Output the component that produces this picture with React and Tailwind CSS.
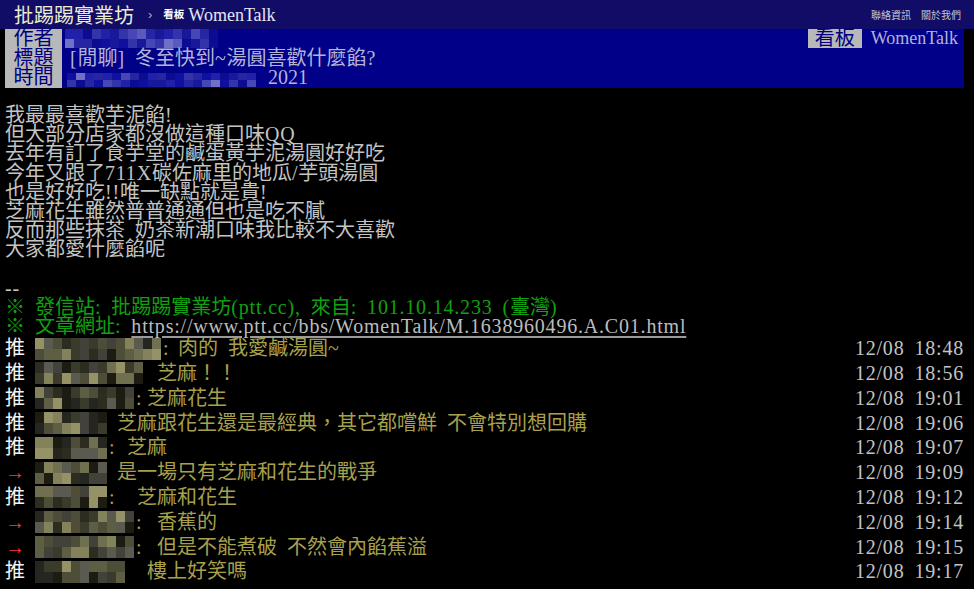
import React from 'react';

const ASCII = /^[\x20-\x7e]+$/;

// half-width runs get stretched a bit so they sit on the 10px grid of the original
function Txt({ s }) {
  return s
    .split(/([\x20-\x7e]+)/)
    .filter(Boolean)
    .map((p, i) =>
      ASCII.test(p) ? (
        <span key={i} className="inline-block align-top tracking-[0.8px] [word-spacing:4.2px]">{p}</span>
      ) : (
        <span key={i} className="inline-block align-top">{p}</span>
      )
    );
}

function Mosaic({ cols, rows, cw, ch, palette, seed }) {
  let s = seed;
  const rnd = () => {
    s = (s * 9301 + 49297) % 233280;
    return s / 233280;
  };
  const cells = [];
  for (let i = 0; i < cols * rows; i++) cells.push(palette[Math.floor(rnd() * palette.length)]);
  return (
    <span className="flex flex-wrap shrink-0" style={{ width: cols * cw }}>
      {cells.map((c, i) => (
        <span key={i} className="block" style={{ width: cw, height: ch, background: c }} />
      ))}
    </span>
  );
}

const olive = ['#1c1c12', '#2c2c20', '#3b3b2b', '#4d4d38', '#5e5e45', '#707050', '#83825a', '#949266', '#42423a', '#5a5a50', '#262620'];
const blues = ['#0c0c92', '#18189a', '#2626a2', '#3434aa', '#4646b4', '#5a5abc', '#7070c6', '#1010a0', '#2020a8'];

const body = [
  '我最最喜歡芋泥餡!',
  '但大部分店家都沒做這種口味QQ',
  '去年有訂了食芋堂的鹹蛋黃芋泥湯圓好好吃',
  '今年又跟了711X碳佐麻里的地瓜/芋頭湯圓',
  '也是好好吃!!唯一缺點就是貴!',
  '芝麻花生雖然普普通通但也是吃不膩',
  '反而那些抹茶 奶茶新潮口味我比較不大喜歡',
  '大家都愛什麼餡呢',
  '',
  '--',
];

const pushes = [
  { tag: '推', cols: 14, colon: true, cx: 178, text: '肉的 我愛鹹湯圓~', time: '12/08 18:48' },
  { tag: '推', cols: 12, colon: false, cx: 157, text: '芝麻！！', time: '12/08 18:56' },
  { tag: '推', cols: 11, colon: true, cx: 147, text: '芝麻花生', time: '12/08 19:01' },
  { tag: '推', cols: 8, colon: false, cx: 117, text: '芝麻跟花生還是最經典，其它都嚐鮮 不會特別想回購', time: '12/08 19:06' },
  { tag: '推', cols: 8, colon: true, cx: 127, text: '芝麻', time: '12/08 19:07' },
  { tag: '→', cols: 8, colon: false, cx: 117, text: '是一場只有芝麻和花生的戰爭', time: '12/08 19:09' },
  { tag: '推', cols: 8, colon: true, cx: 137, text: '芝麻和花生', time: '12/08 19:12' },
  { tag: '→', cols: 11, colon: true, cx: 157, text: '香蕉的', time: '12/08 19:14' },
  { tag: '→', cols: 11, colon: true, cx: 157, text: '但是不能煮破 不然會內餡蕉溢', time: '12/08 19:15' },
  { tag: '推', cols: 10, colon: false, cx: 147, text: '樓上好笑嗎', time: '12/08 19:17' },
];

export default function App() {
  return (
    <div className="w-full h-[589px] overflow-hidden bg-black font-['Liberation_Serif','Noto_Sans_CJK_TC',serif] text-[20px] leading-[19.2px] text-[#c4c4c4]">
      {/* top bar */}
      <div className="h-[29px] bg-[#110d66] flex items-center pl-[14px] pr-[13px]">
        <span className="font-['Noto_Sans_CJK_TC',sans-serif] text-[20px] leading-none text-[#ececd0]">批踢踢實業坊</span>
        <span className="ml-[14px] text-[13px] leading-none text-[#b0b0c0] font-['Liberation_Sans',sans-serif]">›</span>
        <span className="ml-[11px] text-[10.5px] leading-none font-bold text-white font-['Noto_Sans_CJK_TC',sans-serif]">看板</span>
        <span className="ml-[4px] text-[18px] leading-none text-[#e6e6f2] font-['Liberation_Serif',serif]">WomenTalk</span>
        <span className="ml-auto flex gap-[10px] text-[10px] leading-none text-[#c4c4cc] font-['Noto_Sans_CJK_TC',sans-serif]">
          <span>聯絡資訊</span>
          <span>關於我們</span>
        </span>
      </div>

      <div className="pl-[5px] pr-[10px]">
        {/* meta */}
        <div className="bg-[#000088] text-[#b4b4d6] leading-[19.67px]">
          <div className="flex items-center h-[19.67px]">
            <span className="w-[57px] h-full bg-[#b8b8b8] text-[#000080] text-center">作者</span>
            <span className="pl-[3px]">
              <Mosaic cols={17} rows={2} cw={9} ch={9.5} palette={blues} seed={17} />
            </span>
            <span className="ml-auto flex items-center h-full pr-[6px]">
              <span className="h-[19px] px-[7px] bg-[#b8b8b8] text-[#000080] leading-[19px]">看板</span>
              <span className="ml-[9px] text-[18px] leading-[19px]">WomenTalk</span>
            </span>
          </div>
          <div className="flex items-center h-[19.67px]">
            <span className="w-[57px] h-full bg-[#b8b8b8] text-[#000080] text-center">標題</span>
            <span className="pl-[8px] whitespace-pre">
              <Txt s="[閒聊] 冬至快到~湯圓喜歡什麼餡?" />
            </span>
          </div>
          <div className="flex items-center h-[19.67px]">
            <span className="w-[57px] h-full bg-[#b8b8b8] text-[#000080] text-center">時間</span>
            <span className="pl-[5px] pt-[4px]">
              <Mosaic cols={21} rows={2} cw={9} ch={7} palette={blues} seed={91} />
            </span>
            <span className="pl-[12px]">2021</span>
          </div>
        </div>

        {/* article */}
        <div className="pt-[18px] whitespace-pre">
          {body.map((l, i) => (
            <div key={i} className="h-[19.2px]">
              <Txt s={l} />
            </div>
          ))}
          <div className="h-[19.2px] text-[#10a010]">
            <Txt s="※ 發信站: 批踢踢實業坊(ptt.cc), 來自: 101.10.14.233 (臺灣)" />
          </div>
          <div className="h-[19.2px] text-[#10a010]">
            <Txt s="※ 文章網址: " />
            <span className="inline-block align-top text-[#bcbcbc] underline underline-offset-[3px] decoration-[#9a9a9a] tracking-[0.8px]">
              https://www.ptt.cc/bbs/WomenTalk/M.1638960496.A.C01.html
            </span>
          </div>
        </div>

        {/* pushes */}
        <div className="leading-[24.8px]">
          {pushes.map((p, i) => (
            <div key={i} className="flex items-center h-[24.8px] whitespace-pre">
              <span className={p.tag === '推' ? 'w-[30px] shrink-0 text-[#f4f4f4]' : 'w-[30px] shrink-0 text-[#ee3a3a]'}>
                {p.tag}
              </span>
              <Mosaic cols={p.cols} rows={2} cw={9} ch={11} palette={olive} seed={i * 37 + 11} />
              <span className="shrink-0 pl-[2px] text-[#a8a04c]" style={{ width: p.cx - 35 - p.cols * 9 }}>
                {p.colon ? ':' : ''}
              </span>
              <span className="text-[#a8a04c]">
                <Txt s={p.text} />
              </span>
              <span className="ml-auto text-[#c4c4c4] tracking-[0.8px] [word-spacing:4.2px]">{p.time}</span>
            </div>
          ))}
        </div>
      </div>
    </div>
  );
}
